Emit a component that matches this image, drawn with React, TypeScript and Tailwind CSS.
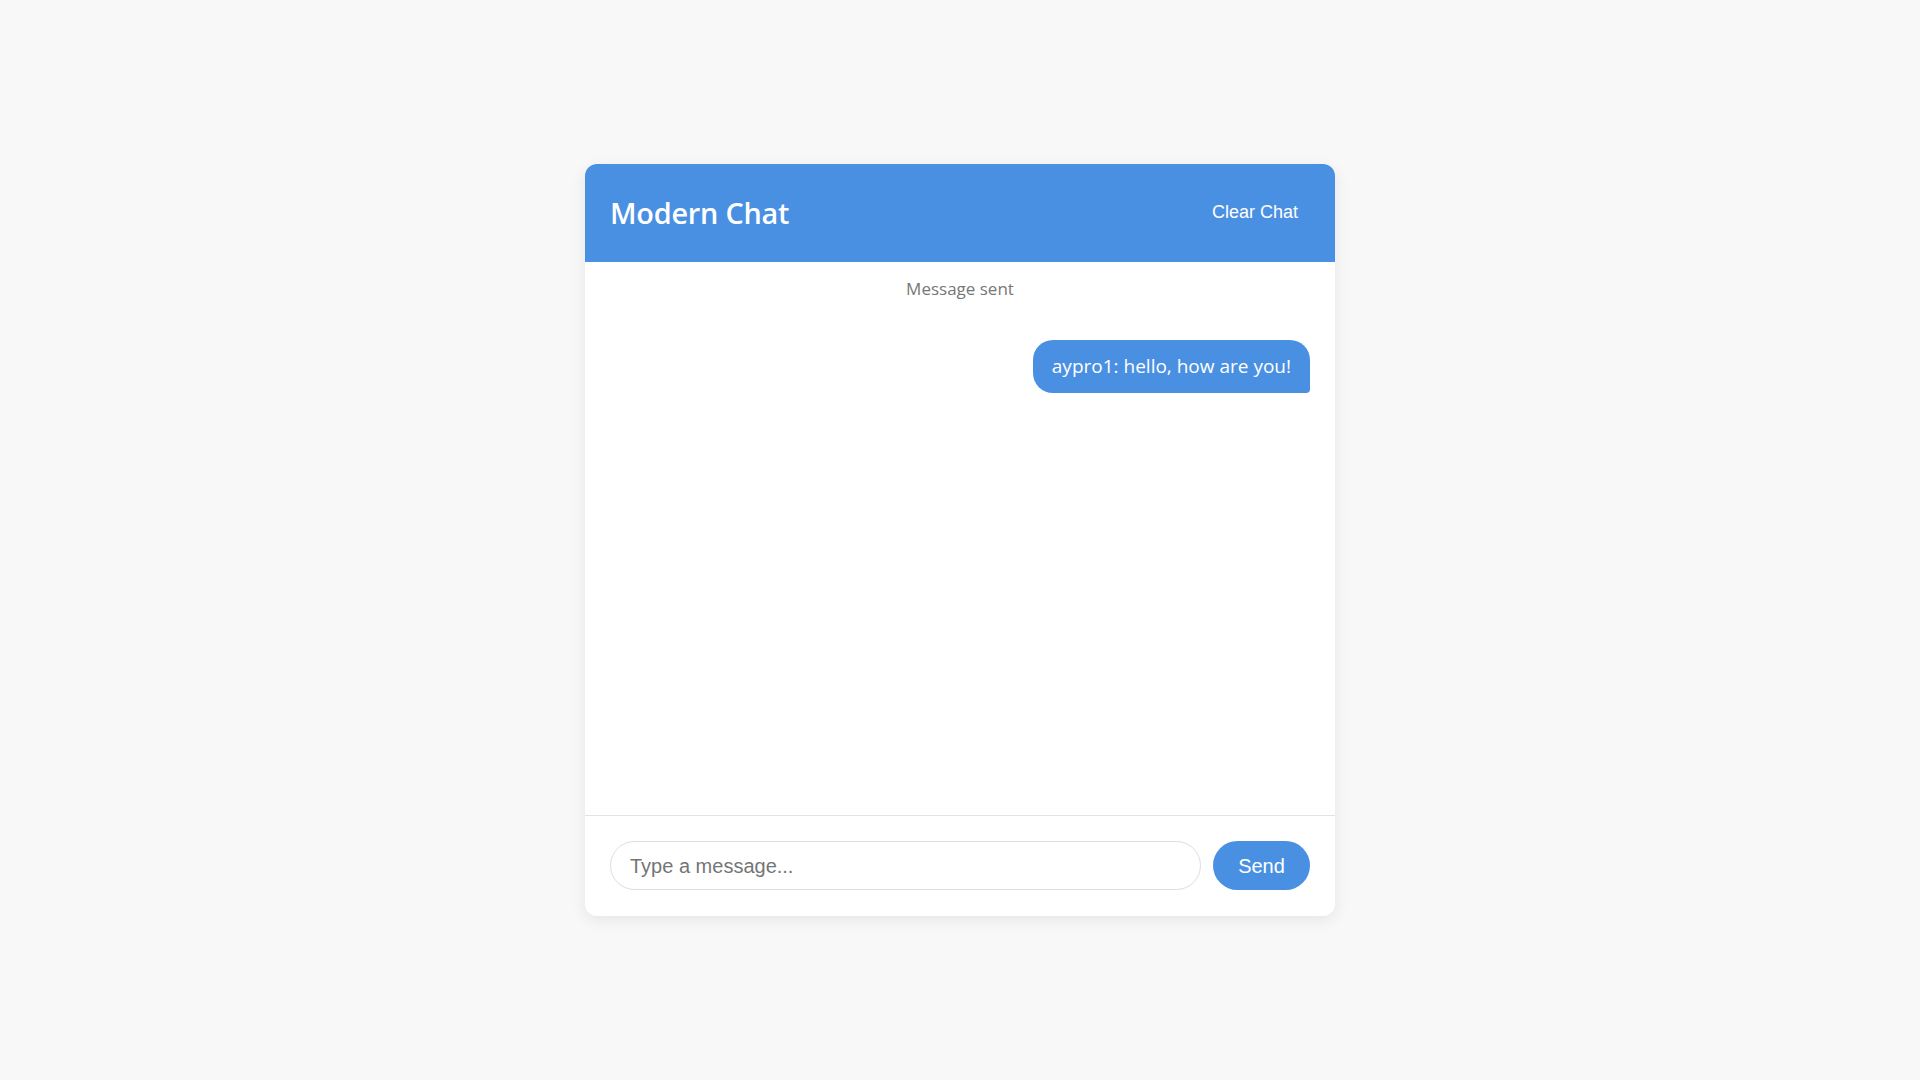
const sans = "font-['Open_Sans','Noto_Sans',sans-serif]";
const arial = "font-['Liberation_Sans',Arial,sans-serif]";

type Message = {
  user: string;
  text: string;
};

const messages: Message[] = [{ user: "aypro1", text: "hello, how are you!" }];

export default function App() {
  return (
    <div className="flex min-h-screen items-center justify-center bg-[#f8f8f8]">
      <div className="flex h-[752px] w-[750px] flex-col overflow-hidden rounded-xl bg-white shadow-[0_4px_16px_rgba(0,0,0,0.08)]">
        <header className="flex h-[98px] items-center justify-between bg-[#4a90e2] pl-[25px] pr-[27px] text-white">
          <h1 className={`${sans} text-[28.8px] font-semibold tracking-[-0.2px]`}>Modern Chat</h1>
          <button className={`${arial} -mt-[2px] px-[10px] py-2 text-[18px] text-white`}>Clear Chat</button>
        </header>

        <main className="flex flex-1 flex-col px-[25px] pt-[14px]">
          <p className={`${sans} text-center text-[17px] leading-[26px] text-[#777]`}>Message sent</p>
          <div className="mt-[38px] flex flex-col items-end gap-3">
            {messages.map((m, i) => (
              <div
                key={i}
                className={`${sans} rounded-[20px] rounded-br-[4px] bg-[#4a90e2] px-[19px] py-[12px] text-[19px] leading-[29px] text-white`}
              >
                {m.user}: {m.text}
              </div>
            ))}
          </div>
        </main>

        <footer className="flex items-center gap-3 border-t border-[#e3e3e3] px-[25px] pt-[25px] pb-[26px]">
          <input
            type="text"
            placeholder="Type a message..."
            className={`${arial} h-[49px] flex-1 rounded-full border border-[#dddddd] px-[19px] pt-[2px] text-[20px] text-[#333] outline-none placeholder:text-[#757575]`}
          />
          <button className={`${arial} h-[49px] w-[97px] rounded-full bg-[#4a90e2] text-[20px] text-white`}>Send</button>
        </footer>
      </div>
    </div>
  );
}
